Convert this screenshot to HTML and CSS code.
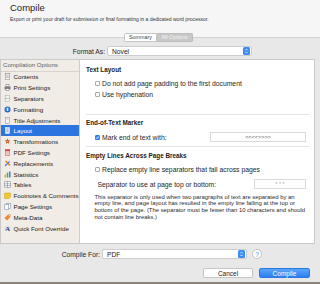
FILE: index.html
```html
<!DOCTYPE html>
<html lang="en">
<head>
    <meta charset="UTF-8">
    <title>Compile</title>
    <link rel="stylesheet" href="styles.css">
</head>
<body>
    <div class="window">
        <header class="sheet-head">
            <h1>Compile</h1>
            <p>Export or print your draft for submission or final formatting in a dedicated word processor.</p>
        </header>
        <div class="tabs">
            <span class="tab">Summary</span><span class="tab active">All Options</span>
        </div>
        <div class="field-row format-row">
            <label>Format As:</label>
            <div class="select">
                <span class="select-text">Novel</span>
                <span class="stepper"><svg viewBox="0 0 8 10"><path d="M2.5 4L4 2.5 5.5 4M2.5 6L4 7.5 5.5 6" fill="none" stroke="#fff" stroke-width="0.9"/></svg></span>
            </div>
        </div>

        <div class="panel">
            <aside class="sidebar">
                <div class="side-head">Compilation Options</div>
                <ul class="side-list">
                    <li><svg class="icon" viewBox="0 0 14 14"><rect x="2.5" y="1" width="9" height="12" fill="#fff" stroke="#7a7a7a"/><path d="M4.5 4h5M4.5 6.5h5M4.5 9h5" stroke="#7a7a7a"/></svg>Contents</li>
                    <li><svg class="icon" viewBox="0 0 14 14"><rect x="4" y="1" width="6" height="4" fill="#fff" stroke="#666"/><rect x="1" y="5" width="12" height="6" rx="1.5" fill="#7d7d7d"/><rect x="4" y="9" width="6" height="4" fill="#fff" stroke="#666"/></svg>Print Settings</li>
                    <li><svg class="icon" viewBox="0 0 14 14"><rect x="3" y="1" width="8" height="12" fill="#f4f4f4" stroke="#aaa"/><path d="M1 7h12" stroke="#999" stroke-width="1.4" stroke-dasharray="2 1"/></svg>Separators</li>
                    <li><svg class="icon" viewBox="0 0 14 14"><circle cx="7" cy="7" r="6" fill="#2463c9"/><circle cx="7" cy="6.5" r="3.8" fill="#5b9ded"/><path d="M7 4v6" stroke="#fff" stroke-width="1.6"/></svg>Formatting</li>
                    <li><svg class="icon" viewBox="0 0 14 14"><rect x="3" y="1" width="8" height="12" fill="#f6f6f6" stroke="#888"/><path d="M5 4h4" stroke="#888"/></svg>Title Adjustments</li>
                    <li class="active"><svg class="icon" viewBox="0 0 14 14"><rect x="3" y="1" width="8" height="12" fill="#dfe8f6" stroke="#fff"/><path d="M5 4h4M5 6.5h4M5 9h4" stroke="#7a8ba6"/></svg>Layout</li>
                    <li><svg class="icon" viewBox="0 0 14 14"><path d="M7 1l1.6 3.6L12.5 5l-3 2.6.9 4L7 9.6 3.6 11.6l.9-4L1.5 5l3.9-.4z" fill="#c0541f"/><circle cx="7" cy="7" r="1.6" fill="#f0b060"/></svg>Transformations</li>
                    <li><svg class="icon" viewBox="0 0 14 14"><rect x="2.5" y="1" width="9" height="12" fill="#f7dede" stroke="#d04545"/><rect x="2.5" y="1" width="9" height="3.5" fill="#d04545"/><path d="M4.5 7.5h5M4.5 10h5" stroke="#d88"/></svg>PDF Settings</li>
                    <li><svg class="icon" viewBox="0 0 14 14"><path d="M2 12L11 3" stroke="#4a7bd0" stroke-width="2.4"/><path d="M3 2l9 9" stroke="#e07b20" stroke-width="2.4"/></svg>Replacements</li>
                    <li><svg class="icon" viewBox="0 0 14 14"><rect x="1" y="7" width="3" height="6" fill="#e8a33a"/><rect x="5.5" y="3" width="3" height="10" fill="#4cae4c"/><rect x="10" y="1" width="3" height="12" fill="#3f7fd1"/></svg>Statistics</li>
                    <li><svg class="icon" viewBox="0 0 14 14"><rect x="1.5" y="1.5" width="11" height="11" fill="#fff" stroke="#6b7787"/><path d="M1.5 5.5h11M1.5 9h11M7 1.5v11" stroke="#6b7787"/></svg>Tables</li>
                    <li><svg class="icon" viewBox="0 0 14 14"><path d="M1 2h12v8l-3 3H1z" fill="#f2c935" stroke="#c79c1a"/></svg>Footnotes &amp; Comments</li>
                    <li><svg class="icon" viewBox="0 0 14 14"><rect x="4.5" y="1" width="8" height="10" fill="#fff" stroke="#6a7f9c"/><rect x="1.5" y="3" width="8" height="10" fill="#fff" stroke="#6a7f9c"/></svg>Page Settings</li>
                    <li><svg class="icon" viewBox="0 0 14 14"><path d="M8 1h5v5l-7 7-5-5z" fill="#e8883a"/><circle cx="10.5" cy="3.5" r="1.1" fill="#fff"/></svg>Meta-Data</li>
                    <li><svg class="icon" viewBox="0 0 14 14"><path d="M1 4h12M1 8h12" stroke="#9ab" stroke-width="0.8"/><text x="7" y="12.5" font-size="13" font-weight="bold" font-family="Liberation Serif" text-anchor="middle" fill="#24467e">A</text></svg>Quick Font Override</li>
                </ul>
            </aside>

            <section class="options">
                <div class="sec-title">Text Layout</div>
                <div class="check-row first"><span class="check"></span>Do not add page padding to the first document</div>
                <div class="check-row second"><span class="check"></span>Use hyphenation</div>
                <div class="rule"></div>

                <div class="sec-title">End-of-Text Marker</div>
                <div class="check-row field-line"><span class="check on"><svg viewBox="0 0 6 6"><path d="M1.3 3.1l1.2 1.2 2.2-2.7" fill="none" stroke="#fff" stroke-width="1"/></svg></span>Mark end of text with:<span class="text-box marker">&lt;&lt;&lt;&lt;&gt;&gt;&gt;&gt;</span></div>
                <div class="rule small"></div>

                <div class="sec-title">Empty Lines Across Page Breaks</div>
                <div class="check-row first"><span class="check"></span>Replace empty line separators that fall across pages</div>
                <div class="sep-row">Separator to use at page top or bottom:<span class="text-box stars">* * *</span></div>
                <p class="note">This separator is only used when two paragraphs of text are separated by an empty line, and page layout has resulted in the empty line falling at the top or bottom of the page. (The separator must be fewer than 10 characters and should not contain line breaks.)</p>
            </section>
        </div>

        <div class="field-row compile-row">
            <label>Compile For:</label>
            <div class="select">
                <span class="select-text">PDF</span>
                <span class="stepper"><svg viewBox="0 0 8 10"><path d="M2.5 4L4 2.5 5.5 4M2.5 6L4 7.5 5.5 6" fill="none" stroke="#fff" stroke-width="0.9"/></svg></span>
            </div>
            <span class="help">?</span>
        </div>

        <div class="buttons">
            <button class="btn">Cancel</button>
            <button class="btn primary">Compile</button>
        </div>
        <div class="desk"></div>
    </div>
</body>
</html>
```

FILE: styles.css
```css
* {
    box-sizing: border-box;
}
body {
    margin: 0;
    width: 320px;
    height: 284px;
    overflow: hidden;
    font-family: "Liberation Sans", Arial, sans-serif;
    color: #222222;
    background-color: #e8e8e8;
}
.window {
    display: flex;
    flex-direction: column;
    height: 284px;
}
.sheet-head {
    flex: none;
    height: 38px;
    padding: 2px 10px 0;
    background-color: #f6f6f6;
    border-bottom: 1px solid #d3d3d3;
}
.sheet-head h1 {
    margin: 0;
    font-size: 9.5px;
    font-weight: normal;
    line-height: 12px;
    color: #1e1e1e;
}
.sheet-head p {
    margin: 2px 0 0;
    font-size: 5.05px;
    line-height: 7px;
    color: #333333;
}
.tabs {
    flex: none;
    display: flex;
    justify-content: center;
    height: 9px;
    margin-top: -5px;
    padding-right: 3px;
}
.tab {
    width: 33px;
    height: 9px;
    font-size: 5.4px;
    line-height: 7px;
    text-align: center;
    background-color: #ffffff;
    border: 1px solid #c4c4c4;
    border-radius: 1.5px 0 0 1.5px;
    color: #444444;
}
.tab.active {
    width: 36px;
    background-color: #c8c8c8;
    border-color: #bdbdbd;
    border-left: none;
    border-radius: 0 1.5px 1.5px 0;
    color: #f3f3f3;
}
.field-row {
    flex: none;
    display: flex;
    align-items: center;
    gap: 2px;
    height: 10px;
}
.field-row label {
    text-align: right;
    font-size: 6.7px;
    color: #262626;
}
.format-row {
    margin-top: 4px;
}
.format-row label {
    width: 105px;
}
.select {
    display: flex;
    align-items: center;
    width: 145px;
    height: 10px;
    padding: 0 1px 0 4px;
    background-color: #ffffff;
    border: 1px solid #cdcdcd;
    border-radius: 2px;
    font-size: 6.7px;
}
.select-text {
    flex-grow: 1;
}
.stepper {
    display: flex;
    width: 7px;
    height: 8px;
    background-color: #3b8cf3;
    border-radius: 1.5px;
}
.stepper svg {
    width: 7px;
    height: 8px;
}
.panel {
    flex: none;
    display: flex;
    width: 315px;
    height: 185px;
    margin-top: 3px;
    background-color: #ffffff;
    border: 1px solid #c9c9c9;
}
.sidebar {
    width: 84px;
    background-color: #f2ece6;
    border-right: 1px solid #d2ccc6;
}
.side-head {
    height: 11.5px;
    padding-left: 2px;
    font-size: 6.1px;
    line-height: 10.5px;
    color: #5e5e5e;
    border-bottom: 1px solid #d9d3cd;
}
.side-list {
    list-style: none;
    margin: 0;
    padding: 0;
}
.side-list li {
    display: flex;
    align-items: center;
    gap: 2.5px;
    height: 10.8px;
    padding-left: 3px;
    font-size: 6.2px;
    color: #202020;
    white-space: nowrap;
}
.side-list li.active {
    background-color: #2c74e0;
    color: #ffffff;
}
.icon {
    flex: none;
    width: 7px;
    height: 7px;
}
.options {
    flex-grow: 1;
    padding: 6px 8px 0 6.5px;
}
.sec-title {
    font-size: 6.35px;
    font-weight: bold;
    line-height: 8px;
    color: #1c1c1c;
}
.check-row {
    display: flex;
    align-items: center;
    gap: 2.5px;
    height: 8px;
    padding-left: 8.5px;
    font-size: 6.8px;
    color: #262626;
    white-space: nowrap;
}
.check-row.first {
    margin-top: 5px;
}
.check-row.second {
    margin-top: 3px;
}
.check {
    display: flex;
    flex: none;
    width: 5px;
    height: 5px;
    background-color: #ffffff;
    border: 1px solid #a9a9a9;
    border-radius: 1px;
}
.check.on {
    background-color: #3a8bf1;
    border-color: #2f7ae0;
}
.check svg {
    width: 5px;
    height: 5px;
    margin: -1px;
}
.rule {
    height: 1px;
    margin: 16px -3px 0 0;
    background-color: #e4e4e4;
}
.rule.small {
    margin-top: 4px;
}
.rule + .sec-title {
    margin-top: 4px;
}
.rule.small + .sec-title {
    margin-top: 5px;
}
.field-line {
    height: 10px;
    margin-top: 5px;
}
.text-box {
    display: flex;
    align-items: center;
    justify-content: center;
    height: 10px;
    margin-left: auto;
    background-color: #ffffff;
    border: 1px solid #dadada;
    font-size: 5.5px;
}
.marker {
    width: 96px;
    color: #555555;
}
.sep-row {
    display: flex;
    align-items: center;
    height: 10px;
    margin-top: 6px;
    padding-left: 11.5px;
    font-size: 6.8px;
    color: #262626;
}
.stars {
    width: 52px;
    color: #a6a6a6;
}
.note {
    margin: 4.5px 0 0;
    padding-left: 8.5px;
    font-size: 5.9px;
    line-height: 6.9px;
    color: #2a2a2a;
}
.compile-row {
    margin-top: 5px;
}
.compile-row label {
    width: 100px;
}
.help {
    display: flex;
    align-items: center;
    justify-content: center;
    width: 10px;
    height: 10px;
    margin-left: 3px;
    background-color: #ffffff;
    border: 1px solid #c2c2c2;
    border-radius: 50%;
    font-size: 6.5px;
    color: #3a7fe0;
}
.buttons {
    flex: none;
    display: flex;
    justify-content: flex-end;
    gap: 6px;
    height: 10px;
    margin-top: 9px;
    padding-right: 10px;
}
.btn {
    width: 50px;
    height: 10px;
    padding: 0;
    font-family: "Liberation Sans", Arial, sans-serif;
    font-size: 6.5px;
    color: #222222;
    background-color: #ffffff;
    border: 1px solid #c6c6c6;
    border-radius: 2px;
}
.btn.primary {
    width: 51px;
    color: #ffffff;
    background: linear-gradient(#5aa6f8, #2b7ff0);
    border-color: #2b78e4;
}
.desk {
    flex: none;
    height: 2px;
    margin-top: auto;
    background-color: #8c8378;
}
```
